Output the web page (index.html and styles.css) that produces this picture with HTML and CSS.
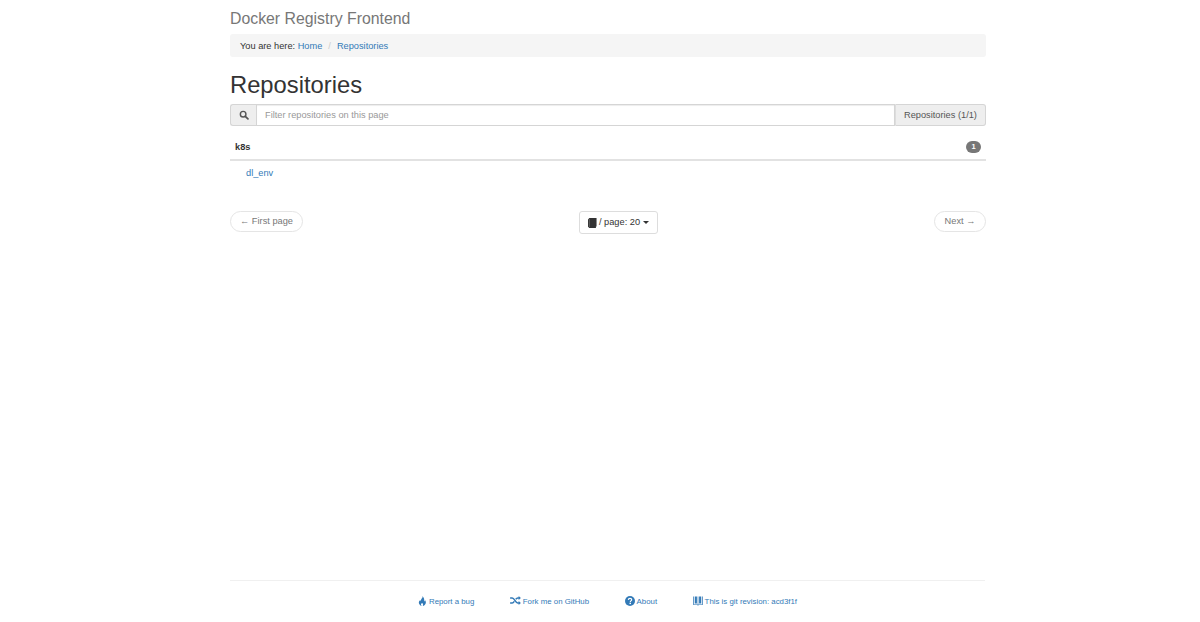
FILE: index.html
```
<!DOCTYPE html>
<html lang="en">
<head>
<meta charset="utf-8">
<title>Docker Registry Frontend</title>
<link rel="stylesheet" href="styles.css">
</head>
<body>
<div class="container">
  <h3 class="brand">Docker Registry Frontend</h3>
  <ol class="breadcrumb">
    <li>You are here:&nbsp;<a href="#">Home</a></li>
    <li class="sep">/</li>
    <li><a href="#">Repositories</a></li>
  </ol>
  <h1 class="title">Repositories</h1>
  <div class="filter">
    <span class="addon addon-left">
      <svg class="icon-search" viewBox="0 0 14 14"><circle cx="5.8" cy="5.8" r="3.9" fill="none" stroke="#555" stroke-width="2"/><path d="M8.800 8.800l3.700 3.700" stroke="#555" stroke-width="2.400" stroke-linecap="round"/></svg>
    </span>
    <input class="filter-input" type="text" placeholder="Filter repositories on this page">
    <span class="addon addon-right">Repositories (1/1)</span>
  </div>
  <div class="group-head"><strong>k8s</strong><span class="badge">1</span></div>
  <div class="repo"><a href="#">dl_env</a></div>
  <div class="pager">
    <a class="pill pill-first" href="#">← First page</a>
    <button class="dropdown" type="button">
      <svg class="icon-book" viewBox="0 0 10 11"><path d="M0 1.500L1.500 0H9.500V9.500H8.800V11H1.500L0 9.700z" fill="#333"/><path d="M1.500 1.200V10" stroke="#777" stroke-width=".7"/></svg>
      <span>/ page: 20</span><span class="caret"></span>
    </button>
    <a class="pill pill-next" href="#">Next →</a>
  </div>
</div>
<footer class="footer">
  <div class="footer-links">
    <a href="#"><svg class="icon-fire" viewBox="0 0 10 11"><path d="M4.800 0c1 1.500-.6 2.500-1.300 3.700C3 4.500 3 5.200 3.300 5.800 2.800 5.600 2.500 5 2.500 4.300 1.300 5.300.6 6.700 1.100 8.200c.4 1.300 1.600 2.400 3 2.800C3.200 10 3 8.800 3.800 7.800c.2.800.7 1.100 1-.1.800.8 1.300 2.100.4 3.300 1.700-.4 3.200-1.700 3.500-3.400.2-1.100-.2-2.200-.9-3-.1.700-.4 1.200-.9 1.400C7.200 4 6.700 1.500 4.800 0z" fill="#337ab7"/></svg>Report a bug</a>
    <a href="#"><svg class="icon-random" viewBox="0 0 12 10"><path d="M0 2.200h2.300c2.700 0 3.700 5.600 6.200 5.600H10M0 7.800h2.300c1 0 1.700-.8 2.300-1.800M6.300 3.700c.6-.8 1.300-1.500 2.200-1.500H10" fill="none" stroke="#337ab7" stroke-width="1.700"/><path d="M9.500 0l2.500 2.200-2.500 2.200zM9.500 5.600l2.500 2.200-2.500 2.200z" fill="#337ab7"/></svg>Fork me on GitHub</a>
    <a href="#"><svg class="icon-help" viewBox="0 0 10 10"><circle cx="5" cy="5" r="5" fill="#337ab7"/><path d="M3.300 3.900C3.400 2.900 4 2.300 5 2.300c1 0 1.700.6 1.700 1.400 0 1.100-1.400 1.200-1.400 2.200" fill="none" stroke="#fff" stroke-width="1.200"/><rect x="4.500" y="6.700" width="1.500" height="1.400" fill="#fff"/></svg>About</a>
    <a href="#"><svg class="icon-git" viewBox="0 0 11 10"><path d="M0 0h1.200v8.500H5V0h1v8.500h3.800V0H11v9.400H6.300V10H4.700V9.400H0z" fill="#337ab7" opacity=".75"/><path d="M2 0h2.300v7.800H2zM6.700 0H9v7.800H6.700z" fill="#337ab7"/></svg>This is git revision: acd3f1f</a>
  </div>
</footer>
</body>
</html>
```
FILE: styles.css
```
* { box-sizing: border-box; }
html, body { margin: 0; height: 622px; overflow: hidden; background: #fff; }
body { font-family: "Liberation Sans", Arial, sans-serif; font-size: 9.240px; line-height: 13px; color: #333; display: flex; flex-direction: column; padding-left: 230px; }
a { color: #337ab7; text-decoration: none; }
.container { width: 756px; flex: 1; }
.brand { margin: 9px 0 5px; font-size: 15.840px; font-weight: 400; line-height: 20px; color: #777; }
.breadcrumb { list-style: none; margin: 0; padding: 1px 10px 0; height: 23px; background: #f5f5f5; border-radius: 3px; display: flex; align-items: center; gap: 6px; }
.breadcrumb .sep { color: #ccc; }
.title { margin: 13px 0 4px; font-size: 23.760px; font-weight: 500; line-height: 30px; }
.filter { display: flex; height: 22px; }
.addon { display: flex; align-items: center; justify-content: center; background: #eee; border: 1px solid #d5d5d5; color: #555; }
.addon-left { width: 26px; border-radius: 3px 0 0 3px; border-right: 0; }
.addon-right { width: 91px; border-radius: 0 3px 3px 0; border-left: 1px solid #ddd; }
.filter-input { flex: 1; min-width: 0; border: 1px solid #d5d5d5; padding: 0 8px; font: inherit; color: #555; box-shadow: inset 0 1px 1px rgba(0,0,0,.075); outline: 0; }
.filter-input::placeholder { color: #999; opacity: 1; }
.group-head { display: flex; justify-content: space-between; align-items: center; height: 35px; padding: 9px 5px 0; border-bottom: 2px solid #e2e2e2; }
.badge { width: 15px; height: 12px; background: #777; color: #fff; font-size: 7.500px; font-weight: 700; border-radius: 6px; line-height: 12px; text-align: center; }
.repo { padding: 6px 16px 0; height: 24px; }
.pager { display: flex; justify-content: space-between; align-items: flex-start; margin-top: 26px; }
.pill { height: 21px; border: 1px solid #e5e5e5; border-radius: 11px; color: #777; background: #fff; line-height: 19px; text-align: center; }
.pill-first { width: 73px; }
.pill-next { width: 52px; }
.dropdown { height: 23px; width: 79px; border: 1px solid #ddd; border-radius: 3px; background: #fff; color: #333; font: inherit; padding: 0; display: flex; align-items: center; justify-content: center; gap: 3px; }
.icon-book { margin-right: -1px; }
.caret { width: 0; height: 0; border-top: 3px solid #333; border-left: 3px solid transparent; border-right: 3px solid transparent; }
.footer { width: 755px; height: 42px; border-top: 1px solid #f0f0f0; font-size: 7.850px; }
.footer-links { display: flex; justify-content: center; gap: 35.500px; padding-top: 14px; }
.footer-links a { display: flex; align-items: center; gap: 2px; }
.footer-links svg { margin-top: -2px; }
.icon-search { width: 10px; height: 10px; }
.icon-book { width: 9px; height: 10px; }
.icon-fire { width: 9px; height: 10px; }
.icon-random { width: 11px; height: 9px; }
.icon-help { width: 10px; height: 10px; }
.icon-git { width: 10px; height: 10px; }
```
